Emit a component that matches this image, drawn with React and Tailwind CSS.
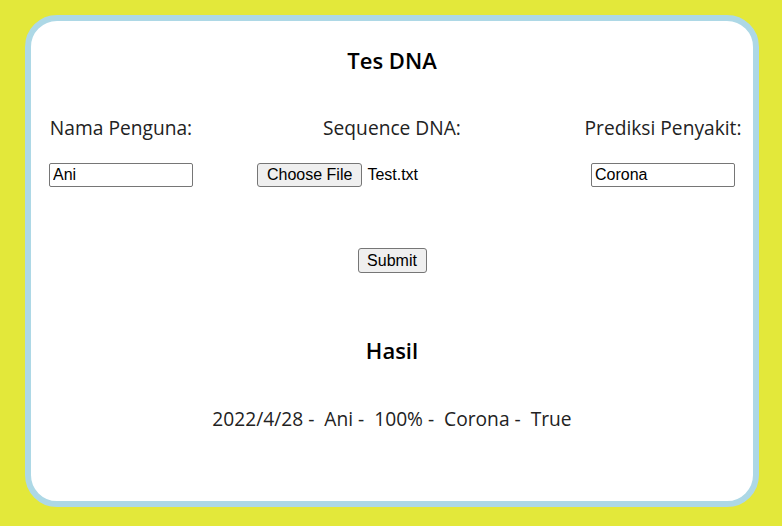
import React from "react";

const sans = { fontFamily: '"Open Sans", "Noto Sans", sans-serif' };

const App = () => {
  return (
    <div className="w-[782px] h-[526px] bg-[#e3e83a] pt-[15px] pl-[25px] pr-[23px] pb-[19px]">
      <div
        className="h-full border-[6px] border-[#add8e6] rounded-[32px] bg-white flex flex-col items-center text-[#222] pt-[25px]"
        style={sans}
      >
        <h1 className="text-[22px] leading-[28px] font-semibold text-black">Tes DNA</h1>

        {/* form row */}
        <div className="w-full flex justify-between mt-[41px]">
          <div className="w-[180px] flex flex-col items-center">
            <label className="text-[19.2px] leading-[26px]">Nama Penguna:</label>
            <input
              type="text"
              defaultValue="Ani"
              className="mt-[22px] w-[144px] h-[24px] border border-[#767676] rounded-[2px] px-[3px] text-[16px] text-black outline-none font-['Liberation_Sans',Arial,sans-serif]"
            />
          </div>

          <div className="w-[270px] flex flex-col items-center">
            <label className="text-[19.2px] leading-[26px]">Sequence DNA:</label>
            <div className="mt-[22px] w-full flex items-center gap-[5px] font-['Liberation_Sans',Arial,sans-serif] text-[16px] text-black">
              <button className="h-[24px] px-[9px] bg-[#efefef] border border-[#767676] rounded-[3px] leading-none">
                Choose File
              </button>
              <span>Test.txt</span>
            </div>
          </div>

          <div className="w-[180px] flex flex-col items-center">
            <label className="text-[19.2px] leading-[26px]">Prediksi Penyakit:</label>
            <input
              type="text"
              defaultValue="Corona"
              className="mt-[22px] w-[144px] h-[24px] border border-[#767676] rounded-[2px] px-[3px] text-[16px] text-black outline-none font-['Liberation_Sans',Arial,sans-serif]"
            />
          </div>
        </div>

        <button className="mt-[61px] w-[69px] h-[25px] bg-[#efefef] border border-[#767676] rounded-[3px] text-[16px] text-black leading-none font-['Liberation_Sans',Arial,sans-serif]">
          Submit
        </button>

        <h2 className="mt-[63px] text-[22px] leading-[28px] font-semibold text-black">Hasil</h2>

        <p className="mt-[42px] text-[19.2px] leading-[26px] whitespace-pre">
          {"2022/4/28 -  Ani -  100% -  Corona -  True"}
        </p>
      </div>
    </div>
  );
};

export default App;
